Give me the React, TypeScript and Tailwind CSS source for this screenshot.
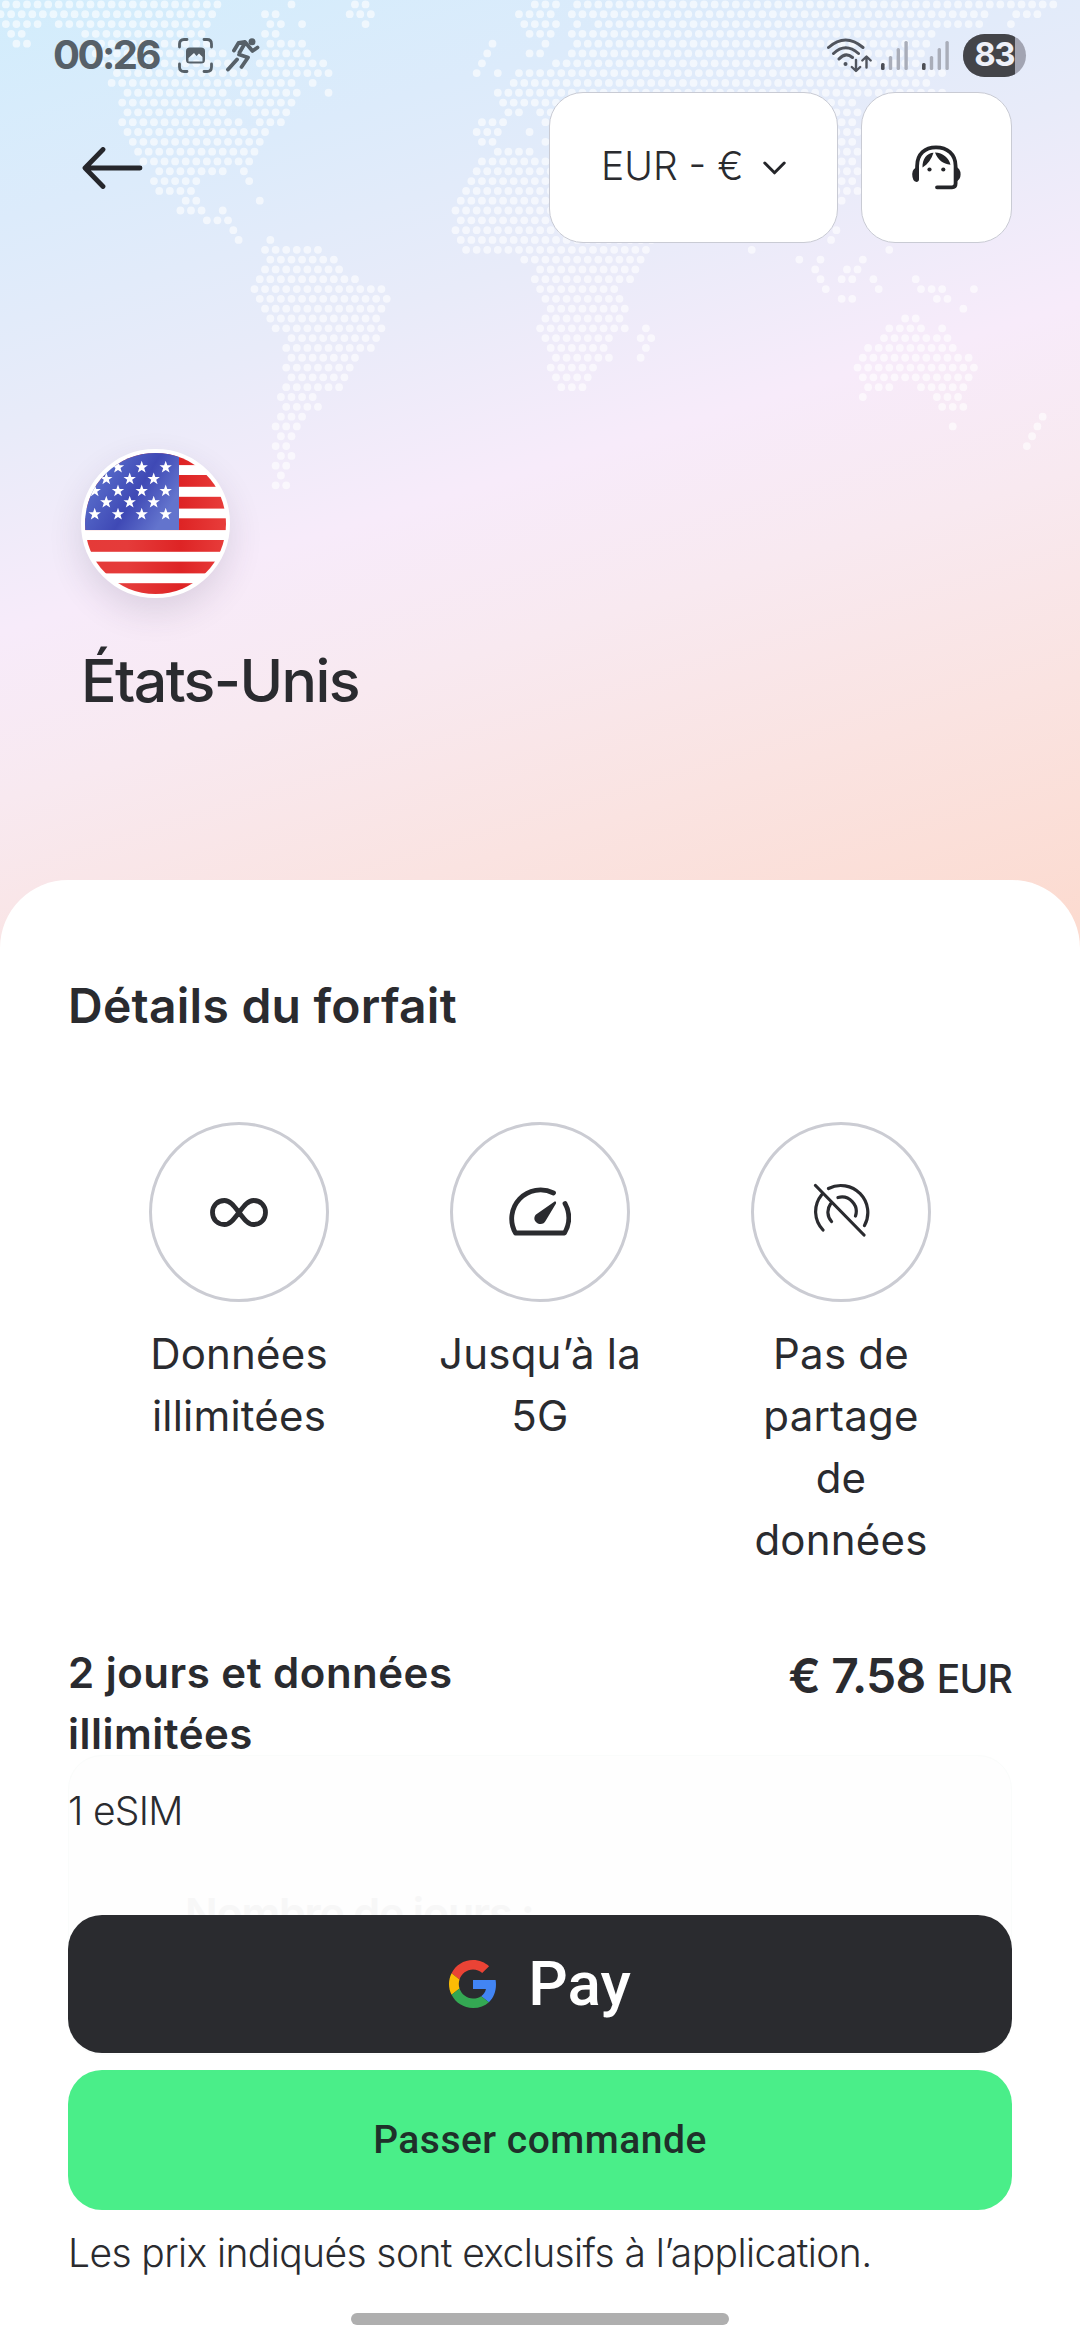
import React from 'react';

// World map dots: one entry per row, each a list of [from, to] spans in px.
const MAP_ROWS: number[][][] = [
    [[6, 218], [291, 291], [355, 365], [534, 555], [577, 1053]],
    [[0, 212], [265, 275], [350, 371], [519, 550], [572, 986], [1016, 1037]],
    [[6, 37], [58, 207], [270, 281], [302, 302], [365, 365], [524, 556], [575, 578], [598, 981], [1011, 1011]],
    [[11, 22], [85, 201], [265, 276], [529, 550], [572, 932]],
    [[16, 27], [93, 207], [270, 302], [492, 492], [546, 546], [577, 927]],
    [[99, 224], [265, 307], [487, 487], [529, 543], [572, 922]],
    [[103, 228], [260, 324], [482, 482], [556, 915]],
    [[117, 245], [265, 329], [476, 476], [497, 497], [519, 943]],
    [[111, 292], [312, 312], [513, 929]],
    [[127, 224], [244, 297], [328, 328], [497, 945]],
    [[122, 292], [503, 857]],
    [[127, 224], [253, 286], [508, 519], [535, 857]],
    [[122, 238], [260, 281], [482, 503], [544, 857]],
    [[127, 265], [476, 497], [529, 529], [560, 857]],
    [[132, 260], [482, 492], [544, 857]],
    [[138, 254], [497, 529], [560, 857]],
    [[143, 249], [482, 857]],
    [[159, 222], [244, 244], [476, 857]],
    [[153, 196], [249, 249], [471, 857]],
    [[159, 191], [465, 857]],
    [[186, 196], [259, 259], [460, 843]],
    [[180, 201], [222, 222], [455, 700]],
    [[207, 228], [460, 700]],
    [[233, 233], [455, 690], [837, 837]],
    [[238, 238], [270, 270], [460, 651], [832, 832]],
    [[265, 317], [466, 646], [752, 752], [889, 889]],
    [[270, 333], [524, 641], [799, 799], [820, 820], [863, 863]],
    [[265, 339], [540, 635], [815, 815], [847, 857]],
    [[260, 355], [535, 630], [820, 820], [842, 852], [873, 873], [916, 916]],
    [[254, 382], [540, 614], [826, 826], [879, 879], [921, 942], [974, 974]],
    [[260, 387], [545, 619], [842, 852], [937, 947]],
    [[265, 382], [550, 625], [963, 963]],
    [[270, 376], [545, 619], [905, 916]],
    [[275, 382], [540, 625], [646, 646], [889, 921], [942, 942]],
    [[291, 376], [545, 609], [641, 651], [884, 947]],
    [[286, 371], [550, 603], [646, 646], [868, 953]],
    [[291, 355], [556, 609], [641, 641], [863, 968]],
    [[286, 349], [550, 593], [857, 974]],
    [[291, 344], [556, 587], [863, 968]],
    [[286, 339], [561, 582], [868, 889], [921, 963]],
    [[281, 313], [863, 863], [937, 958]],
    [[286, 318], [942, 963]],
    [[281, 302], [1042, 1042]],
    [[275, 297], [953, 953], [1037, 1037]],
    [[281, 291], [1032, 1032]],
    [[275, 286], [1027, 1027]],
    [[281, 291]],
    [[275, 286]],
    [[281, 281]],
    [[275, 286]],
];

const PITCH = 10.58;

const WorldMap = (): React.JSX.Element => (
    <svg
        className="absolute top-0 left-0 fill-white/60"
        width="1080"
        height="560"
        viewBox="0 0 1080 560"
    >
        {MAP_ROWS.map((spans, row) => {
            const origin = row % 2 ? 0.55 : 5.84;

            return spans.map(([from, to]) => {
                const first = Math.round((from - origin) / PITCH);
                const last = Math.round((to - origin) / PITCH);

                return Array.from({ length: last - first + 1 }).map((_, i) => (
                    <circle
                        key={`${row}-${first + i}`}
                        cx={origin + (first + i) * PITCH}
                        cy={4.4 + row * 9.815}
                        r="3.9"
                    />
                ));
            });
        })}
    </svg>
);

const SignalBars = (): React.JSX.Element => (
    <svg width="27" height="29" viewBox="0 0 27 29" className="fill-[#a9adb9]">
        <rect x="0" y="22" width="3.6" height="7" rx="1.5" fill="#4c4e55" />
        <rect x="7.8" y="15" width="3.4" height="14" rx="1.5" />
        <rect x="15.6" y="7" width="3.4" height="22" rx="1.5" />
        <rect x="23.4" y="0" width="3.4" height="29" rx="1.5" />
    </svg>
);

const StatusBar = (): React.JSX.Element => (
    <div className="flex h-[92px] items-center pt-[18px] pr-[54px] pl-[53px] text-[#566068]">
        <span className="w-[125px] font-[Inter] text-[40px] leading-none font-bold tracking-[-2.5px]">
            00:26
        </span>
        <svg width="35" height="35" viewBox="0 0 35 35" fill="none">
            <path
                d="M1.5 9V6Q1.5 1.5 6 1.5H9M26 1.5H29Q33.5 1.5 33.5 6V9M33.5 26V29Q33.5 33.5 29 33.5H26M9 33.5H6Q1.5 33.5 1.5 29V26"
                stroke="currentColor"
                strokeWidth="2.8"
                strokeLinecap="round"
            />
            <path
                fillRule="evenodd"
                fill="currentColor"
                d="M12 9.5H23Q27 9.5 27 13V22Q27 25.5 23 25.5H12Q8 25.5 8 22V13Q8 9.5 12 9.5ZM10.5 23.5H24.5V19L21 15.5L18.5 18L16 15L10.5 20Z"
            />
        </svg>
        <svg
            className="ml-[13px]"
            width="34"
            height="34"
            viewBox="0 0 34 34"
            fill="none"
            stroke="currentColor"
            strokeWidth="3.8"
            strokeLinecap="round"
            strokeLinejoin="round"
        >
            <circle cx="26" cy="3.8" r="3.5" fill="currentColor" stroke="none" />
            <path d="M8 12.5L12.5 5L19 4L26.5 13L31.5 9.5M18.5 6L13.5 14.5M13 16.5L22 19.5L15.5 29M11 21.5L2 31.5" />
        </svg>
        <div className="ml-auto flex items-center">
            <svg
                width="46"
                height="35"
                viewBox="0 0 46 35"
                fill="none"
                stroke="#50545d"
                strokeWidth="3"
                strokeLinecap="round"
                strokeLinejoin="round"
            >
                <path d="M1.5 9.5Q18.5 -5.5 36 9.5M6.5 15.5Q18.5 4 31.5 15.5M12 21Q18.5 13.5 25.5 19.5" />
                <circle cx="18.5" cy="26" r="2" fill="#50545d" stroke="none" />
                <path d="M29 22V32.5M24.8 29L29 33L33.2 29M39.5 29.5V19M35.3 22.5L39.5 18.5L43.7 22.5" strokeWidth="2.4" />
            </svg>
            <div className="ml-[8px]">
                <SignalBars />
            </div>
            <div className="ml-[14px]">
                <SignalBars />
            </div>
            <div className="ml-[14px] flex h-[43px] w-[63px] items-center overflow-hidden rounded-full bg-[#a2a4b2]">
                <div className="flex h-full w-[52px] items-center justify-end bg-[#434449] pr-[1px] font-[Inter] text-[33px] font-bold tracking-[-1.5px] text-[#eef0f8]">
                    83
                </div>
            </div>
        </div>
    </div>
);

const HeadsetIcon = (): React.JSX.Element => (
    <svg width="49" height="45" viewBox="0 0 49 45" fill="#242529">
        <path
            d="M5.1 34V21C5.1 9 13 2.3 24 2.3C35 2.3 43.6 9 43.6 21V38.5Q43.6 42.3 40 42.3H25"
            fill="none"
            stroke="#242529"
            strokeWidth="3.8"
            strokeLinecap="round"
        />
        <path d="M6.8 21.5V35Q6.5 37 4.5 37Q0.2 36 0.2 29Q0.2 23 6.8 21.5ZM43 21.5Q48.6 23 48.6 29.5Q48.6 35.5 43 37Z" />
        <path d="M10.5 22.5C10 14 15 8 21.5 7.7C19.5 14 16 19 10.5 22.5ZM23 7.5C31 7.7 37 13 38.5 19.8C31 19 26 15 23 7.5Z" />
        <circle cx="17.5" cy="24.5" r="2.1" />
        <circle cx="31.3" cy="24.5" r="2.1" />
    </svg>
);

const STAR_ROWS = [
    { y: 466.3, xs: [118, 141.7, 165.7] },
    { y: 478, xs: [106.3, 129.7, 153.7] },
    { y: 490, xs: [94.7, 118, 141.7, 165.7] },
    { y: 501.3, xs: [106.3, 129.7, 153.7] },
    { y: 513.3, xs: [94.7, 118, 141.7, 165.7] },
];

const STAR =
    'M0 -6.5L1.6 -2.1L6.2 -2L2.5 0.8L3.9 5.3L0 2.6L-3.9 5.3L-2.5 0.8L-6.2 -2L-1.6 -2.1Z';

const UsFlag = (): React.JSX.Element => (
    <div className="h-[149px] w-[149px] overflow-hidden rounded-full border-4 border-white bg-white shadow-[0_14px_34px_rgba(60,50,80,0.14)]">
        <svg width="141" height="141" viewBox="85 452 141 141">
            <defs>
                <linearGradient id="canton" x1="0" y1="0" x2="1" y2="0.5">
                    <stop offset="0" stopColor="#6c80d6" />
                    <stop offset="0.3" stopColor="#5365c6" />
                    <stop offset="0.65" stopColor="#3f49b5" />
                    <stop offset="1" stopColor="#6374cd" />
                </linearGradient>
                <linearGradient id="stripe" gradientUnits="userSpaceOnUse" x1="85" y1="0" x2="226" y2="0">
                    <stop offset="0" stopColor="#e53a38" />
                    <stop offset="0.3" stopColor="#e53b3a" />
                    <stop offset="0.68" stopColor="#de2425" />
                    <stop offset="1" stopColor="#e83d3b" />
                </linearGradient>
            </defs>
            {[452.3, 474, 495.8, 517.3, 539, 560.6, 582.2].map((y) => (
                <rect key={y} x="85" y={y} width="141" height="11.8" fill="url(#stripe)" />
            ))}
            <rect x="85" y="452" width="94" height="77" fill="url(#canton)" />
            {STAR_ROWS.map(({ y, xs }) =>
                xs.map((x) => (
                    <path key={`${x}-${y}`} d={STAR} transform={`translate(${x} ${y})`} fill="#fff" />
                ))
            )}
        </svg>
    </div>
);

const InfinityIcon = (): React.JSX.Element => (
    <svg width="58" height="29" viewBox="0 0 58 29" fill="none" stroke="#2a2b2f" strokeWidth="4.8">
        <path d="M29 14.5C24 8 20 2.5 14.5 2.5C7.5 2.5 2.5 7.5 2.5 14.5C2.5 21.5 7.5 26.5 14.5 26.5C20 26.5 24 21 29 14.5C34 8 38 2.5 43.5 2.5C50.5 2.5 55.5 7.5 55.5 14.5C55.5 21.5 50.5 26.5 43.5 26.5C38 26.5 34 21 29 14.5Z" />
    </svg>
);

const GaugeIcon = (): React.JSX.Element => (
    <svg width="62" height="50" viewBox="0 0 62 50" fill="none">
        <path
            d="M56 16.5A28.8 28.8 0 0 1 55.5 46H6.5A28.8 28.8 0 0 1 44.5 6"
            stroke="#2a2b2f"
            strokeWidth="4.8"
            strokeLinecap="round"
            strokeLinejoin="round"
        />
        <path
            d="M46 14.2Q47.6 14.5 47 16.5L36.8 33.5C35 37.5 30.5 38 27.5 35.5C24.5 33 25 29.5 27 27.5Z"
            fill="#2a2b2f"
        />
    </svg>
);

const HotspotOffIcon = (): React.JSX.Element => (
    <svg
        className="-mt-[4px]"
        width="57"
        height="54"
        viewBox="0 0 57 54"
        fill="none"
        stroke="#2a2b2f"
        strokeWidth="3.2"
        strokeLinecap="round"
    >
        <path d="M2.5 2.5L51 52M15.5 5.5A27 27 0 0 1 51.5 42.5M8.5 12A26.5 26.5 0 0 0 10 47M25 14.5A14.5 14.5 0 0 1 42.5 33M17.5 21A14 14 0 0 0 18.5 38.5" />
    </svg>
);

const GoogleLogo = (): React.JSX.Element => (
    <svg width="48" height="48" viewBox="0 0 48 48">
        <path fill="#EA4335" d="M24 9.5c3.54 0 6.71 1.22 9.21 3.6l6.85-6.85C35.9 2.38 30.47 0 24 0 14.62 0 6.51 5.38 2.56 13.22l7.98 6.19C12.43 13.72 17.74 9.5 24 9.5z" />
        <path fill="#4285F4" d="M46.98 24.55c0-1.57-.15-3.09-.38-4.55H24v9.02h12.94c-.58 2.96-2.26 5.48-4.78 7.18l7.73 6c4.51-4.18 7.09-10.36 7.09-17.65z" />
        <path fill="#FBBC05" d="M10.53 28.59c-.48-1.45-.76-2.99-.76-4.59s.27-3.14.76-4.59l-7.98-6.19C.92 16.46 0 20.12 0 24c0 3.88.92 7.54 2.56 10.78l7.97-6.19z" />
        <path fill="#34A853" d="M24 48c6.48 0 11.93-2.13 15.89-5.81l-7.73-6c-2.15 1.45-4.92 2.3-8.16 2.3-6.26 0-11.57-4.22-13.47-9.91l-7.98 6.19C6.51 42.62 14.62 48 24 48z" />
    </svg>
);

const FEATURES = [
    { icon: <InfinityIcon />, lines: ['Données', 'illimitées'] },
    { icon: <GaugeIcon />, lines: ['Jusqu’à la', '5G'] },
    { icon: <HotspotOffIcon />, lines: ['Pas de', 'partage', 'de', 'données'] },
];

const Header = (): React.JSX.Element => (
    <header className="relative h-[960px] bg-[linear-gradient(163deg,#d2edfc_0%,#dcebfb_17%,#e8ebf9_33%,#f7ebfa_49%,#f8e9f0_62%,#fae3e1_78%,#fcdbd0_97%)]">
        <WorldMap />
        <div className="relative">
            <StatusBar />
            <div className="flex h-[151px] items-center pr-[68px] pl-[82px]">
                <svg
                    width="61"
                    height="42"
                    viewBox="0 0 61 42"
                    fill="none"
                    stroke="#25262b"
                    strokeWidth="4.8"
                    strokeLinecap="round"
                    strokeLinejoin="round"
                >
                    <path d="M58 21H3.5M21 2.5L3 21L21 39.5" />
                </svg>
                <button className="ml-auto flex h-[151px] w-[289px] items-center rounded-[34px] border-[1.5px] border-[#c9cbd4] bg-white pl-[51px] text-[39px] text-[#2a2b2f]">
                    <span className="w-[162px] pb-[3px] text-left font-light">EUR - €</span>
                    <svg
                        width="23"
                        height="14"
                        viewBox="0 0 23 14"
                        fill="none"
                        stroke="#242529"
                        strokeWidth="3"
                        strokeLinecap="round"
                        strokeLinejoin="round"
                    >
                        <path d="M1.8 2L11.5 11.8L21.2 2" />
                    </svg>
                </button>
                <button className="ml-[23px] flex h-[151px] w-[151px] items-center justify-center rounded-[34px] border-[1.5px] border-[#c9cbd4] bg-white">
                    <HeadsetIcon />
                </button>
            </div>
            <div className="mt-[206px] pl-[81px]">
                <UsFlag />
                <h1 className="mt-[43px] text-[59px] leading-[80px] font-medium tracking-[-1.6px]">
                    États-Unis
                </h1>
            </div>
        </div>
    </header>
);

export default function App(): React.JSX.Element {
    return (
        <div className="h-[2340px] w-[1080px] overflow-hidden bg-white font-[Inter,sans-serif] text-[#2a2b2f]">
            <Header />
            <main className="relative -mt-[80px] h-[1460px] rounded-t-[68px] bg-white px-[68px] pt-[96px]">
                <h2 className="text-[48px] leading-[60px] font-semibold tracking-[0.25px]">
                    Détails du forfait
                </h2>
                <div className="-mx-[2px] mt-[86px] flex h-[449px] justify-center">
                    {FEATURES.map(({ icon, lines }) => (
                        <div key={lines.join(' ')} className="flex w-[301px] flex-col items-center">
                            <div className="flex h-[180px] w-[180px] items-center justify-center rounded-full border-[3px] border-[#cbccd3]">
                                {icon}
                            </div>
                            <p className="mt-[21px] text-center text-[42px] leading-[62px] tracking-[0.2px]">
                                {lines.map((line) => (
                                    <span key={line} className="block">
                                        {line}
                                    </span>
                                ))}
                            </p>
                        </div>
                    ))}
                </div>

                <div className="absolute top-[875px] left-[68px] h-[300px] w-[944px] rounded-[34px] border border-[#fafcfb] bg-[#fefefe] pt-[127px] pl-[116px]">
                    <span className="text-[43px] leading-[60px] font-semibold tracking-[-1.2px] text-[#f7f7f7]">
                        Nombre de jours :
                    </span>
                </div>

                <div className="relative mt-[71px]">
                    <div className="flex items-start justify-between">
                        <p className="w-[430px] text-[42px] leading-[61px] font-semibold tracking-[0.5px]">
                            2 jours et données
                            <br />
                            illimitées
                        </p>
                        <p className="mt-[2px] text-[48px] leading-[64px] font-semibold tracking-[-0.8px]">
                            € 7.58 <span className="text-[39px] font-medium">EUR</span>
                        </p>
                    </div>
                    <p className="mt-[23px] text-[39px] leading-[48px] font-light tracking-[-0.7px]">
                        1 eSIM
                    </p>
                    <button className="mt-[80px] flex h-[138px] w-full items-center justify-center gap-[31px] rounded-[34px] bg-[#2a2b2f] text-white">
                        <GoogleLogo />
                        <span className="font-[Roboto] text-[62px] leading-none font-medium">
                            Pay
                        </span>
                    </button>
                    <button className="mt-[17px] flex h-[140px] w-full items-center justify-center rounded-[34px] bg-[#4aee89] pt-[1px] font-[Roboto] text-[39px] font-medium tracking-[0.5px] text-[#1f302a]">
                        Passer commande
                    </button>
                    <p className="mt-[19px] text-[39px] leading-[48px] font-light tracking-[-0.6px] whitespace-nowrap">
                        Les prix indiqués sont exclusifs à l’application.
                    </p>
                    <div className="mx-auto mt-[36px] h-[12px] w-[378px] rounded-full bg-[#afafaf]" />
                </div>
            </main>
        </div>
    );
}
